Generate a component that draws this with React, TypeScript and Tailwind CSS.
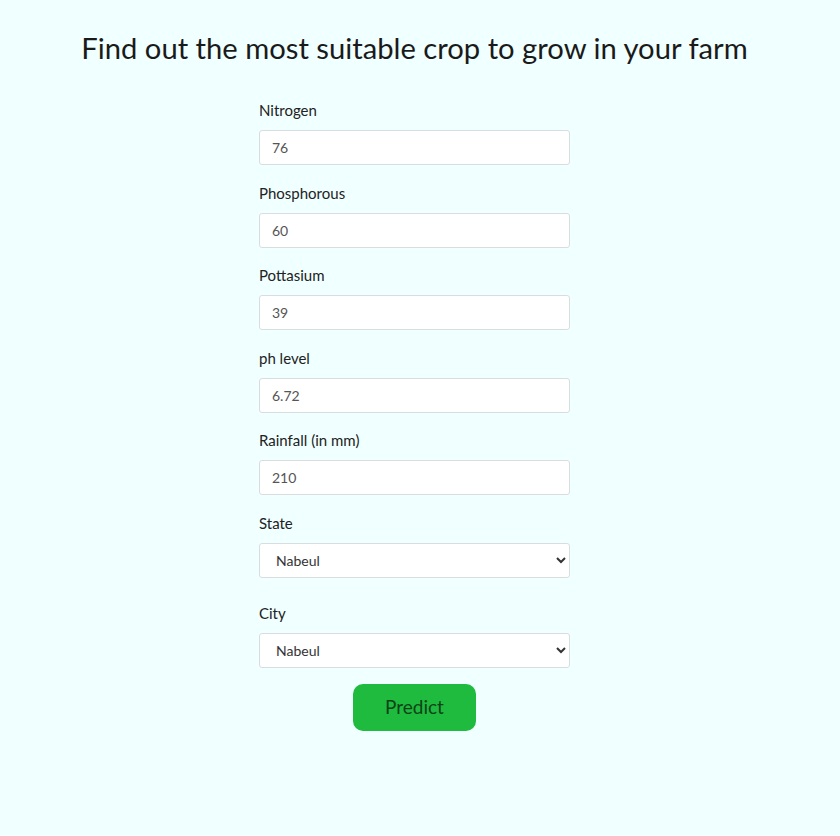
import React from "react";

const fields = [
  { label: "Nitrogen", value: "76" },
  { label: "Phosphorous", value: "60" },
  { label: "Pottasium", value: "39" },
  { label: "ph level", value: "6.72" },
  { label: "Rainfall (in mm)", value: "210" },
];

export default function App() {
  return (
    <div
      className="min-h-[836px] w-full bg-[#f0ffff] text-[#222]"
      style={{ fontFamily: "Lato, 'Open Sans', sans-serif" }}
    >
      <h1 className="pt-[30px] pr-[11px] text-center text-[29.2px] leading-[36px] font-normal text-[#1a1a1a]">
        Find out the most suitable crop to grow in your farm
      </h1>
      <form className="ml-[259px] mt-[34px] w-[311px] flex flex-col" onSubmit={(e) => e.preventDefault()}>
        {fields.map((f) => (
          <div key={f.label} className="flex flex-col mb-[17.5px]">
            <label className="text-[15px] leading-[20px] text-[#222]">{f.label}</label>
            <input
              defaultValue={f.value}
              className="mt-[10px] h-[35px] w-full rounded-[3px] border border-[#d9dddd] bg-white px-3 text-[14px] text-[#555] outline-none"
            />
          </div>
        ))}
        <div className="flex flex-col mb-[25px]">
          <label className="text-[15px] leading-[20px] text-[#222]">State</label>
          <select
            defaultValue="Nabeul"
            className="mt-[10px] h-[35px] w-full rounded-[3px] border border-[#d9dddd] bg-white px-3 text-[14px] text-[#333] outline-none"
          >
            <option>Nabeul</option>
          </select>
        </div>
        <div className="flex flex-col">
          <label className="text-[15px] leading-[20px] text-[#222]">City</label>
          <select
            defaultValue="Nabeul"
            className="mt-[10px] h-[35px] w-full rounded-[3px] border border-[#d9dddd] bg-white px-3 text-[14px] text-[#333] outline-none"
          >
            <option>Nabeul</option>
          </select>
        </div>
        <div className="flex justify-center mt-[16px]">
          <button
            type="submit"
            className="h-[47px] w-[123px] rounded-[10px] bg-[#1fbb3e] text-[19px] text-[#0d4218]"
          >
            Predict
          </button>
        </div>
      </form>
    </div>
  );
}
